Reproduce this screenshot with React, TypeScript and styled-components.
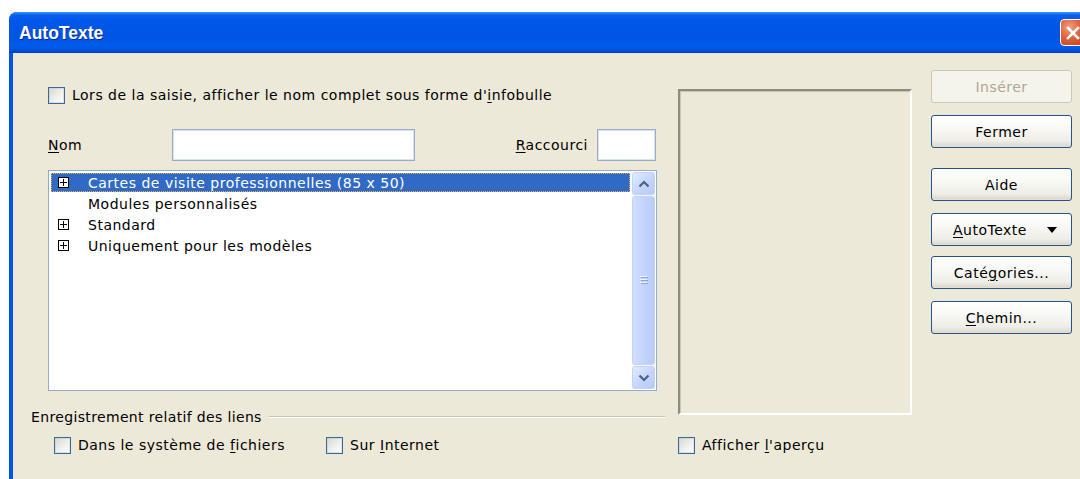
import React from 'react';
import styled, { createGlobalStyle } from 'styled-components';

const Global = createGlobalStyle`
  html, body { margin: 0; padding: 0; background: #ffffff; overflow: hidden; }
  body { font-family: "DejaVu Sans", Verdana, sans-serif; }
  #root { width: 1080px; height: 479px; overflow: hidden; }
`;

const Window = styled.div`
  margin: 12px 0 0 9px;
  width: 1081px;
  height: 480px;
  display: flex;
  flex-direction: column;
  border-radius: 8px 8px 0 0;
  overflow: hidden;
  background: #0055e5;
`;

const TitleBar = styled.div`
  height: 41px;
  flex: none;
  display: flex;
  align-items: center;
  padding: 2px 4px 0 10px;
  box-sizing: border-box;
  background: linear-gradient(
    to bottom,
    #3d92ff 0px,
    #0b60f0 3px,
    #0057e8 9px,
    #0054e3 26px,
    #005cec 34px,
    #0052dd 38px,
    #003fbf 41px
  );
`;

const Title = styled.span`
  font: bold 17.5px "Liberation Sans", Arial, sans-serif;
  color: #ffffff;
  text-shadow: 1px 1px 0 #0a2a9a;
  flex: 1;
`;

const CloseButton = styled.div`
  width: 26px;
  height: 27px;
  border: 1px solid #ffffff;
  border-radius: 4px;
  box-sizing: border-box;
  background: radial-gradient(circle at 35% 30%, #f2a185 0%, #e0623d 45%, #c2401a 100%);
  display: flex;
  align-items: center;
  justify-content: center;
  margin-top: -2px;
`;

const Client = styled.div`
  flex: 1;
  margin-left: 4px;
  background: #ece9d8;
  display: grid;
  grid-template-columns: 634px 234px 147px;
  column-gap: 13px;
  padding-left: 18px;
  align-items: start;
  font-size: 14px;
  letter-spacing: 0.5px;
  color: #000000;
`;

const LeftColumn = styled.div`
  display: flex;
  flex-direction: column;
`;

const MiddleColumn = styled.div`
  display: flex;
  flex-direction: column;
`;

const RightColumn = styled.div`
  display: flex;
  flex-direction: column;
  padding-top: 17px;
  margin-left: 6px;
`;

const CheckRow = styled.label<{ $top: number; $indent: number }>`
  display: flex;
  align-items: center;
  gap: 7px;
  height: 18px;
  margin-top: ${(p) => p.$top}px;
  margin-left: ${(p) => p.$indent}px;
  white-space: nowrap;
`;

const CheckLine = styled.div`
  display: flex;
  align-items: center;
`;

const Box = styled.span`
  width: 17px;
  height: 17px;
  box-sizing: border-box;
  border: 1px solid #3d6894;
  box-shadow: inset 0 0 0 1px rgba(190, 205, 222, 0.55);
  background: linear-gradient(135deg, #d8d8d1 0%, #f2f2ee 60%, #ffffff 100%);
  flex: none;
`;

const Key = styled.span`
  text-decoration: underline;
  text-underline-offset: 2px;
`;

const NameRow = styled.div`
  display: flex;
  align-items: center;
  margin: 25px 0 0 17px;
  width: 608px;
  height: 32px;
`;

const FieldLabel = styled.span<{ $width?: number }>`
  ${(p) => (p.$width ? `width: ${p.$width}px;` : '')}
  flex: none;
`;

const Field = styled.div<{ $width: number }>`
  width: ${(p) => p.$width}px;
  height: 32px;
  box-sizing: border-box;
  background: #ffffff;
  border: 1px solid #95adc8;
  box-shadow: inset 0 0 0 1px #dbe4ee;
  flex: none;
`;

const Spacer = styled.div<{ $width?: number }>`
  flex: ${(p) => (p.$width ? 'none' : '1')};
  width: ${(p) => (p.$width ? `${p.$width}px` : 'auto')};
`;

const ListBox = styled.div`
  margin: 9px 0 0 17px;
  width: 609px;
  height: 221px;
  box-sizing: border-box;
  border: 1px solid #95adc8;
  background: #ffffff;
  display: flex;
  padding: 1px 1px 1px 2px;
  gap: 2px;
`;

const Rows = styled.div`
  flex: 1;
  display: flex;
  flex-direction: column;
`;

const Row = styled.div<{ $selected?: boolean }>`
  height: 19px;
  margin: 1px 0;
  display: flex;
  align-items: center;
  padding-left: 7px;
  box-sizing: border-box;
  background: ${(p) => (p.$selected ? '#316ac5' : 'transparent')};
  color: ${(p) => (p.$selected ? '#ffffff' : '#000000')};
  outline: ${(p) => (p.$selected ? '1px dotted #e8b04a' : 'none')};
  outline-offset: -1px;
`;

const Expander = styled.span<{ $hidden?: boolean }>`
  width: 11px;
  height: 11px;
  box-sizing: border-box;
  border: 1px solid #000000;
  background: #ffffff;
  margin-right: 19px;
  flex: none;
  display: flex;
  align-items: center;
  justify-content: center;
  visibility: ${(p) => (p.$hidden ? 'hidden' : 'visible')};
`;

const ScrollBar = styled.div`
  width: 23px;
  display: flex;
  flex-direction: column;
  gap: 1px;
  background: #f4f6fb;
`;

const ScrollButton = styled.div`
  height: 23px;
  box-sizing: border-box;
  border: 1px solid #c3d3f6;
  border-radius: 3px;
  background: linear-gradient(135deg, #e3ebff 0%, #c6d6fd 50%, #b5c8f6 100%);
  display: flex;
  align-items: center;
  justify-content: center;
  flex: none;
`;

const Thumb = styled.div`
  flex: 1;
  box-sizing: border-box;
  border: 1px solid #c3d3f6;
  border-radius: 3px;
  background: linear-gradient(to right, #d2defd 0%, #c4d3fc 50%, #b8cbf8 100%);
  display: flex;
  align-items: center;
  justify-content: center;
`;

const GroupHeader = styled.div`
  display: flex;
  align-items: center;
  gap: 7px;
  height: 17px;
  margin-top: 17px;
  white-space: nowrap;
  letter-spacing: 0.35px;
`;

const GroupRule = styled.div`
  flex: 1;
  height: 1px;
  background: #c7c4b4;
  border-bottom: 1px solid #ffffff;
`;

const Preview = styled.div`
  margin-top: 36px;
  height: 326px;
  box-sizing: border-box;
  border: 2px solid;
  border-color: #8e8c7e #ffffff #ffffff #8e8c7e;
  box-shadow: inset 1px 1px 0 #c9c6b6;
`;

const Button = styled.div<{ $top: number; $disabled?: boolean; $split?: boolean }>`
  height: 33px;
  margin-top: ${(p) => p.$top}px;
  box-sizing: border-box;
  border: 1px solid ${(p) => (p.$disabled ? '#cac8bb' : '#24558a')};
  border-radius: 3px;
  background: ${(p) =>
    p.$disabled
      ? '#f5f4ea'
      : 'linear-gradient(to bottom, #ffffff 0%, #f7f7f3 45%, #eeede6 80%, #d9d5ca 100%)'};
  color: ${(p) => (p.$disabled ? '#aca899' : '#000000')};
  display: flex;
  align-items: center;
  justify-content: ${(p) => (p.$split ? 'space-between' : 'center')};
  padding: ${(p) => (p.$split ? '0 14px 0 21px' : '0')};
  box-shadow: ${(p) => (p.$disabled ? 'none' : 'inset 0 -1px 0 #e3dfd3')};
  white-space: nowrap;
`;

const Chevron: React.FC<{ down?: boolean }> = ({ down }) => (
  <svg width="12" height="8" viewBox="0 0 12 8">
    <path
      d={down ? 'M1.5 1.5 L6 6 L10.5 1.5' : 'M1.5 6.5 L6 2 L10.5 6.5'}
      fill="none"
      stroke="#4d6185"
      strokeWidth="2.2"
    />
  </svg>
);

const Grip = () => (
  <svg width="8" height="9" viewBox="0 0 8 9">
    {[0, 3, 6].map((y) => (
      <g key={y}>
        <rect x="0" y={y} width="7" height="1" fill="#eef3ff" />
        <rect x="1" y={y + 1} width="7" height="1" fill="#8ca5dc" />
      </g>
    ))}
  </svg>
);

const PlusGlyph = () => (
  <svg width="9" height="9" viewBox="0 0 9 9">
    <rect x="1" y="4" width="7" height="1" fill="#000" />
    <rect x="4" y="1" width="1" height="7" fill="#000" />
  </svg>
);

const CloseGlyph = () => (
  <svg width="14" height="14" viewBox="0 0 14 14">
    <path d="M2 2 L12 12 M12 2 L2 12" stroke="#ffffff" strokeWidth="2.6" strokeLinecap="square" />
  </svg>
);

const DropArrow = () => (
  <svg width="10" height="6" viewBox="0 0 10 6">
    <path d="M0 0 H10 L5 6 Z" fill="#000" />
  </svg>
);

const entries = [
  { label: 'Cartes de visite professionnelles (85 x 50)', expandable: true, selected: true },
  { label: 'Modules personnalisés', expandable: false },
  { label: 'Standard', expandable: true },
  { label: 'Uniquement pour les modèles', expandable: true },
];

export default function App() {
  return (
    <>
      <Global />
      <Window>
        <TitleBar>
          <Title>AutoTexte</Title>
          <CloseButton>
            <CloseGlyph />
          </CloseButton>
        </TitleBar>
        <Client>
          <LeftColumn>
            <CheckRow $top={33} $indent={17}>
              <Box />
              <span>
                Lors de la saisie, afficher le nom complet sous forme d'<Key>i</Key>nfobulle
              </span>
            </CheckRow>
            <NameRow>
              <FieldLabel $width={124}>
                <Key>N</Key>om
              </FieldLabel>
              <Field $width={243} />
              <Spacer />
              <FieldLabel>
                <Key>R</Key>accourci
              </FieldLabel>
              <Spacer $width={9} />
              <Field $width={59} />
            </NameRow>
            <ListBox>
              <Rows>
                {entries.map((e) => (
                  <Row key={e.label} $selected={e.selected}>
                    <Expander $hidden={!e.expandable}>
                      <PlusGlyph />
                    </Expander>
                    {e.label}
                  </Row>
                ))}
              </Rows>
              <ScrollBar>
                <ScrollButton>
                  <Chevron />
                </ScrollButton>
                <Thumb>
                  <Grip />
                </Thumb>
                <ScrollButton>
                  <Chevron down />
                </ScrollButton>
              </ScrollBar>
            </ListBox>
            <GroupHeader>
              <span>Enregistrement relatif des liens</span>
              <GroupRule />
            </GroupHeader>
            <CheckLine>
              <CheckRow $top={11} $indent={23}>
                <Box />
                <span>
                  Dans le système de <Key>f</Key>ichiers
                </span>
              </CheckRow>
              <CheckRow $top={11} $indent={41}>
                <Box />
                <span>
                  Sur <Key>I</Key>nternet
                </span>
              </CheckRow>
            </CheckLine>
          </LeftColumn>
          <MiddleColumn>
            <Preview />
            <CheckRow $top={21} $indent={0}>
              <Box />
              <span>
                Afficher <Key>l</Key>'aperçu
              </span>
            </CheckRow>
          </MiddleColumn>
          <RightColumn>
            <Button $top={0} $disabled>
              Insérer
            </Button>
            <Button $top={12}>Fermer</Button>
            <Button $top={20}>Aide</Button>
            <Button $top={12} $split>
              <span>
                <Key>A</Key>utoTexte
              </span>
              <DropArrow />
            </Button>
            <Button $top={10}>
              <span>
                Caté<Key>g</Key>ories...
              </span>
            </Button>
            <Button $top={12}>
              <span>
                <Key>C</Key>hemin...
              </span>
            </Button>
          </RightColumn>
        </Client>
      </Window>
    </>
  );
}
